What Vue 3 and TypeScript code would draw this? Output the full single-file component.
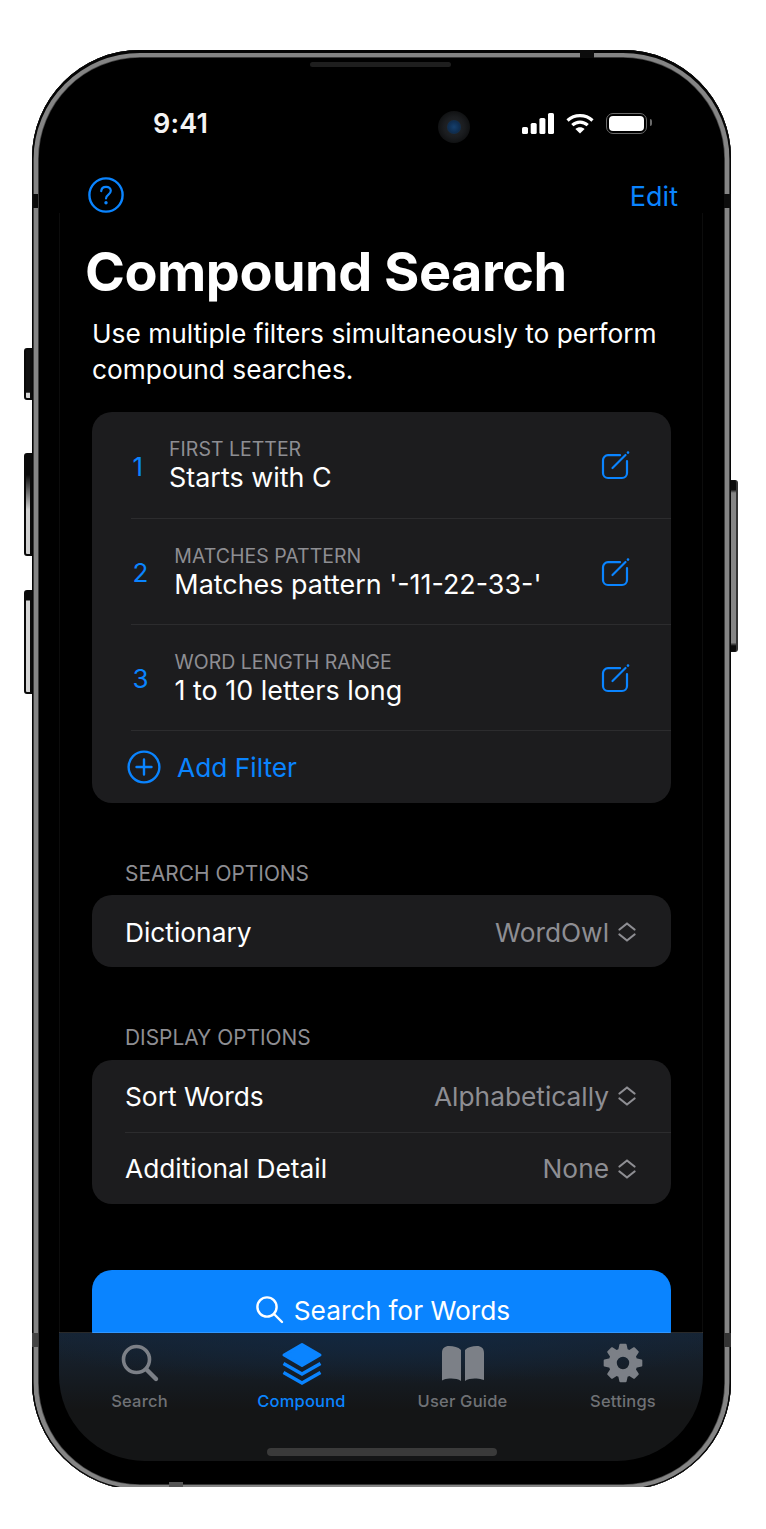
<script setup lang="ts">
interface Filter {
  num: number
  label: string
  value: string
}
interface OptionRow {
  name: string
  value: string
}

const filters: Filter[] = [
  { num: 1, label: 'FIRST LETTER', value: 'Starts with C' },
  { num: 2, label: 'MATCHES PATTERN', value: "Matches pattern '-11-22-33-'" },
  { num: 3, label: 'WORD LENGTH RANGE', value: '1 to 10 letters long' },
]
const displayOptions: OptionRow[] = [
  { name: 'Sort Words', value: 'Alphabetically' },
  { name: 'Additional Detail', value: 'None' },
]

// eight toothed gear for the settings tab
const gearPath = (() => {
  const cx = 22
  const cy = 23
  const outer = 18.5
  const inner = 13.5
  const pts: string[] = []
  for (let i = 0; i < 8; i++) {
    const a = (i * Math.PI) / 4 - Math.PI / 2
    const step = Math.PI / 8
    const list: [number, number][] = [
      [inner, a - step * 0.72],
      [outer, a - step * 0.36],
      [outer, a + step * 0.36],
      [inner, a + step * 0.72],
    ]
    list.forEach(([r, t]) => {
      pts.push(`${(cx + r * Math.cos(t)).toFixed(2)} ${(cy + r * Math.sin(t)).toFixed(2)}`)
    })
  }
  const hole = 7.2
  return `M${pts.join('L')}Z M${cx - hole} ${cy}a${hole} ${hole} 0 1 0 ${hole * 2} 0a${hole} ${hole} 0 1 0 ${-hole * 2} 0Z`
})()
</script>

<template>
  <div class="page">
    <div class="stage">
      <div class="phone">
        <!-- hardware bits that sit over the frame -->
        <i class="btn btn-mute"></i>
        <i class="btn btn-up"></i>
        <i class="btn btn-down"></i>
        <i class="btn btn-power"></i>
        <i class="notch n-top"></i>
        <i class="notch n-left"></i>
        <i class="notch n-right"></i>
        <i class="notch n-left2"></i>
        <i class="notch n-right2"></i>
        <i class="notch n-bottom"></i>
        <i class="speaker"></i>
        <i class="camera"><i class="lens"></i></i>

        <div class="screen">
          <div class="status">
            <span class="time">9:41</span>
            <div class="status-icons">
              <svg width="32" height="21" viewBox="0 0 32 21" fill="#fff">
                <rect x="0" y="14" width="6" height="7" rx="1.6" />
                <rect x="8.700" y="10" width="6" height="11" rx="1.6" />
                <rect x="17.400" y="5" width="6" height="16" rx="1.6" />
                <rect x="26" y="0" width="6" height="21" rx="1.6" />
              </svg>
              <svg width="28" height="21" viewBox="0 0 28 21" fill="none" stroke="#fff" stroke-width="3.2">
                <path d="M1.5 7.5C8.5 1 19.5 1 26.5 7.5" />
                <path d="M6.3 12.2C10.8 8 17.2 8 21.7 12.2" />
                <path d="M14 20.6l-4.6-4.7c2.6-2.3 6.6-2.3 9.2 0z" fill="#fff" stroke="none" />
              </svg>
              <div class="battery"><i class="battery-fill"></i><i class="battery-knob"></i></div>
            </div>
          </div>

          <div class="nav">
            <svg width="36" height="36" viewBox="0 0 36 36" fill="none" stroke="#0a84ff" stroke-width="2.400">
              <circle cx="18" cy="18" r="16.600" />
              <path d="M13.200 14.200c.2-2.800 2.200-4.400 4.900-4.400s4.700 1.600 4.700 4c0 3.800-4.800 3.700-4.800 7.600" stroke-width="2.200" stroke-linecap="round" />
              <circle cx="18" cy="25.800" r="1.700" fill="#0a84ff" stroke="none" />
            </svg>
            <span class="edit">Edit</span>
          </div>

          <div class="scroll">
            <h1 class="title">Compound Search</h1>
            <p class="intro">Use multiple filters simultaneously to perform compound searches.</p>

            <div class="card filters">
              <div v-for="f in filters" :key="f.num" class="filter-row">
                <span class="num">{{ f.num }}</span>
                <div class="filter-text">
                  <div class="filter-label">{{ f.label }}</div>
                  <div class="filter-value">{{ f.value }}</div>
                </div>
                <svg class="edit-icon" width="30" height="30" viewBox="0 0 30 30" fill="none" stroke="#0a84ff" stroke-width="2.200" stroke-linecap="round">
                  <path d="M20 5.200H8a5 5 0 0 0-5 5V23a5 5 0 0 0 5 5h14a5 5 0 0 0 5-5V11" />
                  <path d="M12.500 18L25.500 5" />
                  <circle cx="28" cy="2.600" r="1.300" fill="#0a84ff" stroke="none" />
                </svg>
              </div>
              <div class="add-row">
                <svg width="34" height="34" viewBox="0 0 34 34" fill="none" stroke="#0a84ff" stroke-width="2.400" stroke-linecap="round">
                  <circle cx="17" cy="17" r="15.400" />
                  <path d="M17 9.500v15M9.500 17h15" />
                </svg>
                <span class="add-text">Add Filter</span>
              </div>
            </div>

            <div class="section-label first">SEARCH OPTIONS</div>
            <div class="card">
              <div class="option-row dict">
                <span class="option-name">Dictionary</span>
                <span class="option-value">WordOwl</span>
                <svg class="updown" width="18" height="20" viewBox="0 0 18 20" fill="none" stroke="#8e8e93" stroke-width="2.200" stroke-linecap="round" stroke-linejoin="round">
                  <path d="M1.500 7.500L9 1.500 16.500 7.500M1.500 12.500L9 18.500 16.500 12.500" />
                </svg>
              </div>
            </div>

            <div class="section-label">DISPLAY OPTIONS</div>
            <div class="card">
              <div v-for="o in displayOptions" :key="o.name" class="option-row">
                <span class="option-name">{{ o.name }}</span>
                <span class="option-value">{{ o.value }}</span>
                <svg class="updown" width="18" height="20" viewBox="0 0 18 20" fill="none" stroke="#8e8e93" stroke-width="2.200" stroke-linecap="round" stroke-linejoin="round">
                  <path d="M1.500 7.500L9 1.500 16.500 7.500M1.500 12.500L9 18.500 16.500 12.500" />
                </svg>
              </div>
            </div>

            <div class="search-btn">
              <svg width="28" height="28" viewBox="0 0 28 28" fill="none" stroke="#fff" stroke-width="2.400" stroke-linecap="round">
                <circle cx="11" cy="11" r="9.600" />
                <path d="M18 18l8 8" />
              </svg>
              <span>Search for Words</span>
            </div>
          </div>

          <div class="tabbar">
            <div class="tab">
              <svg width="44" height="48" viewBox="0 0 44 48" fill="none" stroke="#7c8087" stroke-width="3.600" stroke-linecap="round">
                <circle cx="18.500" cy="19.500" r="13" />
                <path d="M28.500 29.500L38 39" stroke-width="4.400" />
              </svg>
              <span class="tab-label">Search</span>
            </div>
            <div class="tab active">
              <svg width="44" height="48" viewBox="0 0 44 48" fill="#0a84ff" stroke="#0a84ff">
                <path d="M22 4.500L40 15 22 25.500 4 15Z" stroke-width="3" stroke-linejoin="round" />
                <path d="M3.500 23.500L22 34 40.500 23.500" fill="none" stroke-width="3.400" />
                <path d="M3.500 32.500L22 43 40.500 32.500" fill="none" stroke-width="3.400" />
              </svg>
              <span class="tab-label">Compound</span>
            </div>
            <div class="tab">
              <svg width="44" height="48" viewBox="0 0 44 48" fill="#7c8087">
                <path d="M1 13c0-5 3-7 7-7 5 0 9 1 12 4v31c-4-3-12-3-17-1.500L1 40.500z" />
                <path d="M43 13c0-5-3-7-7-7-5 0-9 1-12 4v31c4-3 12-3 17-1.500l2 .5z" />
              </svg>
              <span class="tab-label">User Guide</span>
            </div>
            <div class="tab">
              <svg width="44" height="48" viewBox="0 0 44 48" fill="#7c8087" fill-rule="evenodd">
                <path :d="gearPath" stroke="#7c8087" stroke-width="2" stroke-linejoin="round" />
              </svg>
              <span class="tab-label">Settings</span>
            </div>
            <i class="home"></i>
          </div>
        </div>
      </div>
    </div>
  </div>
</template>

<style scoped>
.page {
  width: 766px;
  height: 1529px;
  background: #fff;
  overflow: hidden;
  font-family: Inter, "Noto Sans", sans-serif;
}
.stage {
  height: 1487px;
  box-sizing: border-box;
  padding: 50px 35px 0 32px;
  overflow: hidden;
}
.phone {
  position: relative;
  width: 699px;
  height: 1440px;
  box-sizing: border-box;
  padding: 8px 28px 29px 27px;
  background: #000;
  border-radius: 108px;
  box-shadow:
    inset 0 0 0 1.200px #060606,
    inset 0 1.500px 0 1.500px #060606,
    inset 0 1px 0 6px #858585,
    inset 0 1px 0 6.800px #4a4a4a;
}

/* side buttons */
.btn {
  position: absolute;
  width: 8px;
  box-sizing: border-box;
  background: #d0d0d0;
  border: 2px solid #0a0a0a;
  border-right-width: 2px;
  border-radius: 3px 0 0 3px;
}
.btn-mute { left: -8px; top: 298px; height: 52px; background: linear-gradient(#111, #111 88%, #d8d8d8 90%); }
.btn-up { left: -8px; top: 403px; height: 103px; background: linear-gradient(#0a0a0a, #0a0a0a 20%, #cfcfcf 55%); }
.btn-down { left: -8px; top: 540px; height: 104px; background: linear-gradient(#0a0a0a, #0a0a0a 8%, #d4d4d4 9%); }
.btn-power {
  right: -7px;
  left: auto;
  top: 430px;
  height: 172px;
  width: 7px;
  background: linear-gradient(#0a0a0a, #0a0a0a 5%, #858585 7%, #858585 95%, #0a0a0a 97%);
  border-width: 1px 2px 1px 0;
  border-color: #111 #333 #111 #111;
  border-radius: 0 3px 3px 0;
}
.notch { position: absolute; background: #0c0c0c; }
.n-top { left: 548px; top: 0; width: 14px; height: 8px; }
.n-left { left: 0; top: 144px; width: 6px; height: 14px; }
.n-right { right: 0; top: 144px; width: 7px; height: 14px; }
.n-left2 { left: 0; top: 1283px; width: 6px; height: 14px; background: #444; }
.n-right2 { right: 0; top: 1283px; width: 7px; height: 14px; background: #333; }
.n-bottom { left: 137px; top: 1432px; width: 14px; height: 6px; background: #555; }
.speaker {
  position: absolute;
  left: 278px;
  top: 12px;
  width: 141px;
  height: 5px;
  border-radius: 3px;
  background: #1e1e1e;
}
.camera {
  position: absolute;
  left: 406px;
  top: 61px;
  width: 32px;
  height: 32px;
  border-radius: 50%;
  background: radial-gradient(circle, #26292c 0, #1b1d20 45%, #101112 72%, #050505 100%);
}
.lens {
  position: absolute;
  left: 9px;
  top: 9px;
  width: 14px;
  height: 14px;
  border-radius: 50%;
  background: radial-gradient(circle, #16406e 0, #0e2c4e 60%, #2a3036 100%);
}

.screen {
  display: flex;
  flex-direction: column;
  height: 100%;
  overflow: hidden;
  border-radius: 0 0 86px 86px;
  color: #fff;
}

.status {
  display: flex;
  align-items: center;
  justify-content: space-between;
  height: 30px;
  padding: 50px 52px 0 94px;
  flex: none;
}
.time {
  font-size: 27px;
  font-weight: 600;
  letter-spacing: 0.2px;
  color: #f4f4f4;
}
.status-icons {
  display: flex;
  align-items: center;
  gap: 12px;
}
.battery {
  position: relative;
  width: 41px;
  height: 21px;
  box-sizing: border-box;
  border: 1.500px solid #6a6a6a;
  border-radius: 7px;
  padding: 2px;
  margin-right: 4px;
}
.battery-fill {
  display: block;
  height: 100%;
  border-radius: 4px;
  background: #fff;
}
.battery-knob {
  position: absolute;
  right: -6px;
  top: 5px;
  width: 2.500px;
  height: 7px;
  border-radius: 0 2px 2px 0;
  background: #6a6a6a;
}

.nav {
  display: flex;
  align-items: center;
  justify-content: space-between;
  flex: none;
  height: 36px;
  margin-top: 39px;
  padding: 0 25px 0 29px;
}
.edit {
  margin-top: 2px;
  font-size: 27px;
  color: #0a84ff;
}

.scroll {
  flex: 1;
  min-height: 0;
  overflow: hidden;
  box-shadow: inset 1px 0 0 #0c0c0c, inset -1px 0 0 #0c0c0c;
}
.title {
  margin: 26px 0 0 26px;
  font-size: 54px;
  line-height: 66px;
  font-weight: 700;
  letter-spacing: -0.5px;
}
.intro {
  margin: 11px 32px 0 33px;
  font-size: 26.300px;
  line-height: 36px;
}

.card {
  margin: 0 32px 0 33px;
  border-radius: 20px;
  background: #1c1c1e;
}
.filters {
  margin-top: 24px;
}
.filter-row {
  display: flex;
  align-items: center;
  height: 106px;
  margin-left: 39px;
  padding: 0 41px 0 1.500px;
  box-sizing: border-box;
  border-bottom: 1px solid #2c2c2e;
}
.filter-row:first-child {
  height: 107px;
}
.num {
  margin-top: 2px;
  margin-right: 26px;
  font-size: 26px;
  color: #0a84ff;
}
.filter-text {
  flex: 1;
  min-width: 0;
  padding-top: 1px;
}
.filter-label {
  font-size: 19.500px;
  line-height: 24px;
  color: #8e8e93;
}
.filter-value {
  font-size: 26.900px;
  line-height: 33px;
  color: #fff;
}
.add-row {
  display: flex;
  align-items: center;
  height: 72px;
  padding-left: 35px;
  gap: 16px;
}
.add-text {
  font-size: 26.300px;
  color: #0a84ff;
}

.section-label {
  margin: 58px 0 9px 66px;
  font-size: 20.900px;
  line-height: 26px;
  color: #8e8e93;
}
.section-label.first {
  margin: 58px 0 8px 66px;
}
.option-row {
  display: flex;
  align-items: center;
  height: 72px;
  margin-left: 33px;
  padding: 0 35px 0 0;
  box-sizing: border-box;
}
.option-row.dict {
  padding-top: 2px;
}
.option-row + .option-row {
  border-top: 1px solid #2c2c2e;
}
.option-name {
  flex: 1;
  font-size: 26.300px;
}
.option-value {
  font-size: 26.300px;
  color: #8e8e93;
}
.updown {
  margin-left: 9px;
}

.search-btn {
  display: flex;
  align-items: center;
  justify-content: center;
  gap: 10px;
  height: 80px;
  margin: 66px 32px 0 33px;
  padding-left: 3px;
  border-radius: 20px;
  background: #0a84ff;
  font-size: 26.300px;
}

.tabbar {
  position: relative;
  display: grid;
  grid-template-columns: repeat(4, 1fr);
  flex: none;
  height: 128px;
  padding-top: 7px;
  box-sizing: border-box;
  background: radial-gradient(ellipse 60% 50px at 50% 0, #12273f 0, rgba(18, 39, 63, 0) 100%), linear-gradient(#172433, #141516 60%);
  box-shadow: 0 -1px 0 rgba(255, 255, 255, 0.16);
}
.tab {
  display: flex;
  flex-direction: column;
  align-items: center;
}
.tab + .tab {
  padding-left: 2px;
}
.tab:nth-child(4) {
  padding-left: 1px;
}
.tab-label {
  margin-top: 3px;
  font-size: 16.500px;
  line-height: 20px;
  font-weight: 500;
  letter-spacing: 0.2px;
  color: #6f7175;
}
.tab.active .tab-label {
  color: #0a84ff;
}
.home {
  position: absolute;
  left: 208px;
  bottom: 5px;
  width: 230px;
  height: 8px;
  border-radius: 4px;
  background: #3a3a3a;
}
</style>
